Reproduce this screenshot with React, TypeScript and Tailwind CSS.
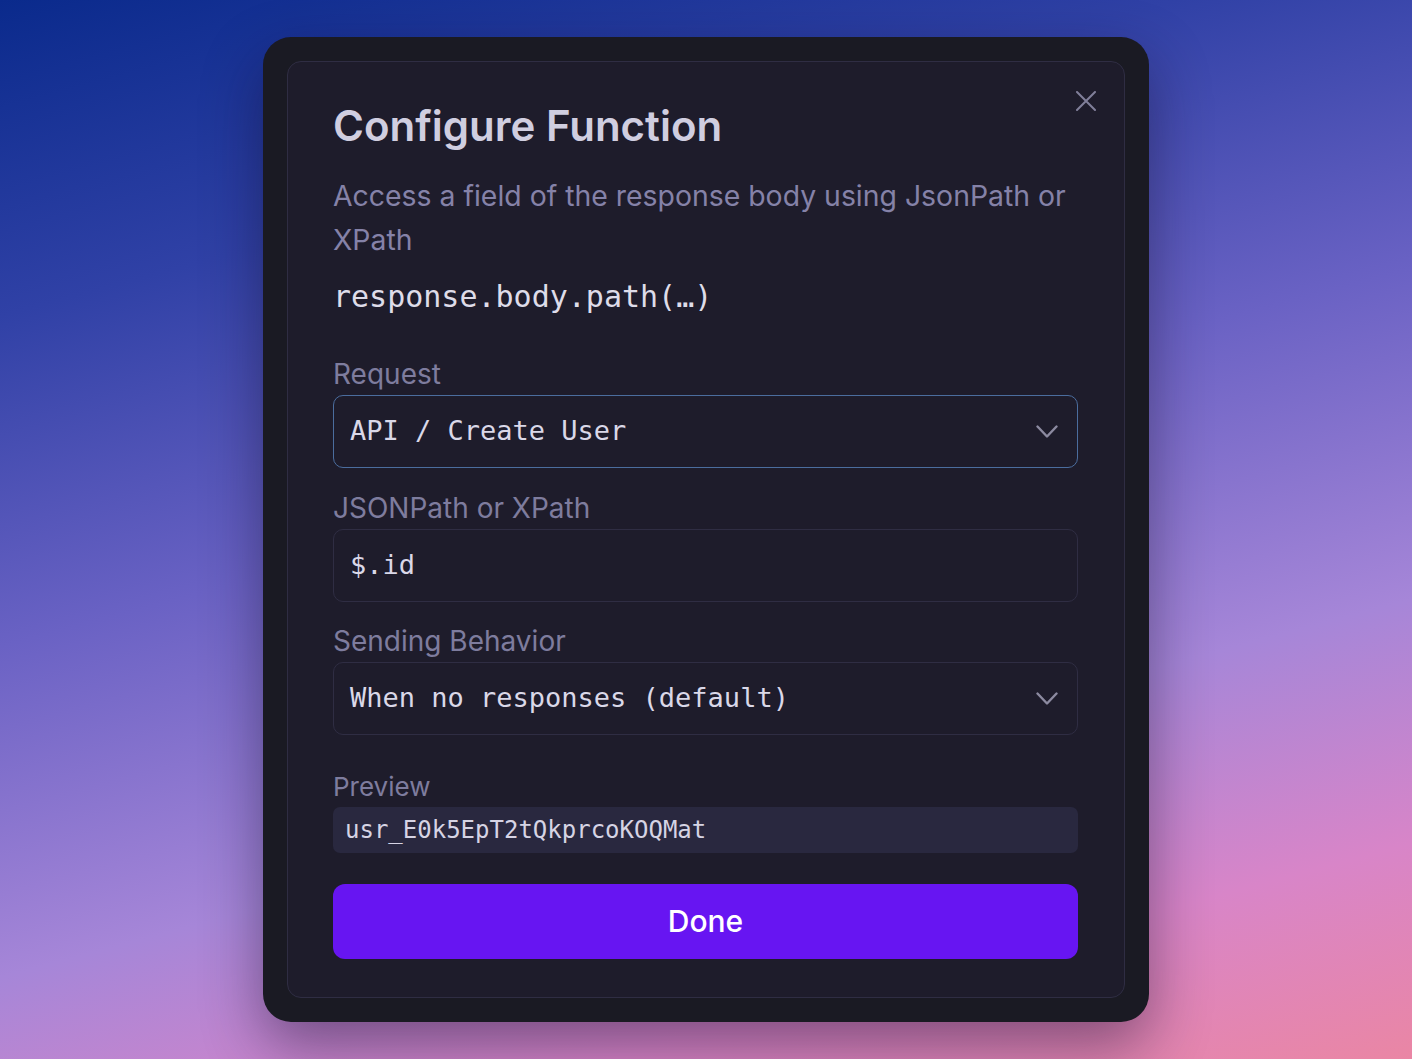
const sans = { fontFamily: 'Inter, "Noto Sans", sans-serif' };
const mono = { fontFamily: '"DejaVu Sans Mono", "Liberation Mono", monospace' };

const Chevron = () => (
  <svg width="22" height="14" viewBox="0 0 22 14" fill="none" className="text-[#8c8aa0]">
    <path d="M1.5 1.5 11 11.5l9.5-10" stroke="currentColor" strokeWidth="2.4" strokeLinecap="round" strokeLinejoin="round" />
  </svg>
);

const Label = ({ children }: { children: string }) => (
  <label className="block text-[28px] leading-[36px] text-[#7e7c9e]">{children}</label>
);

const SelectBox = ({ value, focused }: { value: string; focused?: boolean }) => (
  <div
    className={`mt-[3px] h-[73px] rounded-[10px] border flex items-center justify-between pl-[16px] pr-[19px] ${
      focused ? 'border-[#4b6d9e]' : 'border-[#2f2d43]'
    }`}
  >
    <span className="text-[27px] text-[#dad8e8]" style={mono}>
      {value}
    </span>
    <Chevron />
  </div>
);

export default function App() {
  return (
    <div
      className="min-h-screen w-full flex justify-center pt-[37px] pb-[37px]"
      style={{
        ...sans,
        background:
          'linear-gradient(165deg, #0a2a8c 0%, #3041a6 22%, #6a62c4 45%, #a686d8 68%, #d885c8 85%, #ea86a4 100%)',
      }}
    >
      <div className="w-[886px] h-[985px] rounded-[28px] bg-[#1a1a23] p-[24px] shadow-[0_24px_60px_rgba(20,10,40,0.45)]">
        <div className="relative h-full rounded-[14px] border border-[#2f2d43] bg-[#1e1c2b] pl-[45px] pr-[46px] pt-[38px]">
          <button className="absolute top-[29px] right-[28px] text-[#817f9a]">
            <svg width="20" height="20" viewBox="0 0 20 20" fill="none">
              <path d="M1 1l18 18M19 1 1 19" stroke="currentColor" strokeWidth="2" strokeLinecap="round" />
            </svg>
          </button>

          <h1 className="text-[42px] leading-[52px] font-semibold text-[#d0cee0]">Configure Function</h1>

          <p className="mt-[22px] text-[28.4px] leading-[44px] text-[#8582a8]">
            Access a field of the response body using JsonPath or XPath
          </p>

          <div className="mt-[15px] text-[30px] leading-[40px] text-[#dedce9]" style={mono}>
            response.body.path(…)
          </div>

          <div className="mt-[39px]">
            <Label>Request</Label>
            <SelectBox value="API / Create User" focused />
          </div>

          <div className="mt-[22px]">
            <Label>JSONPath or XPath</Label>
            <div className="mt-[3px] h-[73px] rounded-[10px] border border-[#2f2d43] flex items-center pl-[16px]">
              <span className="text-[27px] text-[#dad8e8]" style={mono}>
                $.id
              </span>
            </div>
          </div>

          <div className="mt-[21px]">
            <Label>Sending Behavior</Label>
            <SelectBox value="When no responses (default)" />
          </div>

          <div className="mt-[35px]">
            <div className="text-[26px] leading-[34px] text-[#7e7c9e]">Preview</div>
            <div className="mt-[3px] h-[46px] rounded-[7px] bg-[#29283f] flex items-center pl-[12px]">
              <span className="text-[24px] text-[#d6d4e4]" style={mono}>
                usr_E0k5EpT2tQkprcoKOQMat
              </span>
            </div>
          </div>

          <button className="mt-[31px] w-full h-[75px] rounded-[12px] bg-[#6715f2] text-white text-[30px] font-medium">
            Done
          </button>
        </div>
      </div>
    </div>
  );
}
